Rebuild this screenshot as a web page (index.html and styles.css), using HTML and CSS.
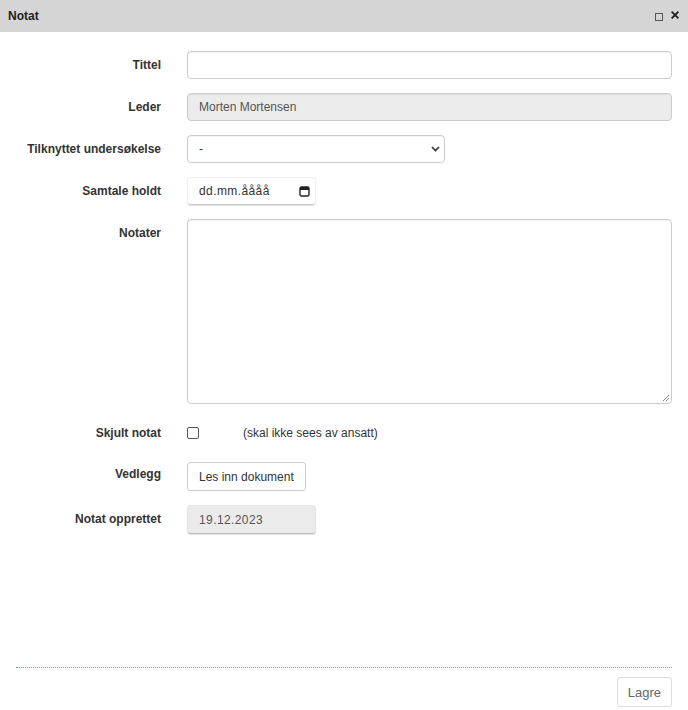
FILE: index.html
```html
<!DOCTYPE html>
<html lang="no">
<head>
<meta charset="utf-8">
<title>Notat</title>
<link rel="stylesheet" href="styles.css">
</head>
<body>
<div class="dialog">
  <div class="titlebar">
    <span class="title">Notat</span>
    <span class="controls">
      <span class="max"></span>
      <svg class="close" width="8" height="8" viewBox="0 0 8 8"><path d="M1.3 1.3 L6.7 6.7 M6.7 1.3 L1.3 6.7" stroke="#222" stroke-width="1.9" stroke-linecap="square"/></svg>
    </span>
  </div>
  <div class="content">
    <div class="form">
      <label class="lbl">Tittel</label>
      <div class="field"><div class="input wide"></div></div>

      <label class="lbl">Leder</label>
      <div class="field"><div class="input wide readonly">Morten Mortensen</div></div>

      <label class="lbl">Tilknyttet undersøkelse</label>
      <div class="field"><div class="input select"><span>-</span>
        <svg class="chev" width="9" height="6" viewBox="0 0 9 6"><path d="M1 1 L4.5 4.5 L8 1" fill="none" stroke="#333" stroke-width="1.6"/></svg></div></div>

      <label class="lbl">Samtale holdt</label>
      <div class="field"><div class="date"><span class="mono">dd.mm.åååå</span>
        <svg class="cal" width="11" height="11" viewBox="0 0 11 11"><rect x="1" y="1" width="9" height="9" rx="1.5" fill="none" stroke="#222" stroke-width="1.4"/><rect x="1" y="1" width="9" height="3" fill="#222"/></svg></div></div>

      <label class="lbl">Notater</label>
      <div class="field"><div class="textarea">
        <svg class="grip" width="8" height="8" viewBox="0 0 8 8"><path d="M7 1 L1 7 M7 4 L4 7" stroke="#888" stroke-width="1"/></svg></div></div>

      <label class="lbl lbl-check">Skjult notat</label>
      <div class="field check-row"><span class="checkbox"></span><span class="hint">(skal ikke sees av ansatt)</span></div>

      <label class="lbl lbl-btn">Vedlegg</label>
      <div class="field"><span class="btn">Les inn dokument</span></div>

      <label class="lbl">Notat opprettet</label>
      <div class="field"><div class="date readonly-date"><span class="mono">19.12.2023</span></div></div>
    </div>
  </div>
  <div class="footer">
    <span class="btn save">Lagre</span>
  </div>
</div>
</body>
</html>
```
FILE: styles.css
```css
html, body {
  margin: 0;
  padding: 0;
  background: #fff;
}
body {
  font-family: "Liberation Sans", Arial, sans-serif;
  font-size: 12px;
  color: #333;
  width: 688px;
  height: 710px;
  overflow: hidden;
}
.dialog {
  display: flex;
  flex-direction: column;
  height: 710px;
}
.titlebar {
  height: 32px;
  background: #d5d5d5;
  display: flex;
  align-items: center;
  justify-content: space-between;
  padding: 0 9px 0 8px;
  box-sizing: border-box;
}
.title {
  font-weight: bold;
  font-size: 12px;
  color: #222;
}
.controls {
  display: flex;
  align-items: center;
  gap: 8px;
  margin-top: -2px;
}
.max {
  width: 6px;
  height: 6px;
  border: 1px solid #555;
  margin-top: 3px;
}
.close { display: block; }
.content {
  flex: 1;
  padding-top: 19px;
}
.form {
  display: grid;
  grid-template-columns: 161px 485px;
  column-gap: 26px;
  row-gap: 14px;
}
.lbl {
  text-align: right;
  font-weight: bold;
  color: #333;
  padding-top: 7px;
  line-height: 14px;
  white-space: nowrap;
}
.lbl-check { padding-top: 0; align-self: center; }
.lbl-btn { padding-top: 5px; }
.field { display: flex; align-items: flex-start; }
.input {
  box-sizing: border-box;
  height: 28px;
  border: 1px solid #ccc;
  border-radius: 4px;
  padding: 0 11px;
  display: flex;
  align-items: center;
  color: #555;
  background: #fff;
  box-shadow: inset 0 1px 1px rgba(0,0,0,0.05);
}
.wide { width: 485px; }
.readonly { background: #ebebeb; }
.select {
  width: 258px;
  height: 28px;
  justify-content: space-between;
  padding-right: 4px;
  color: #333;
}
.chev { display: block; }
.date {
  box-sizing: border-box;
  width: 129px;
  height: 28px;
  border: 1px solid #f0f0f0;
  border-bottom-color: #c8c8c8;
  border-radius: 4px;
  box-shadow: 0 1px 1px rgba(0,0,0,0.12);
  display: flex;
  align-items: center;
  justify-content: space-between;
  padding: 0 5px 0 11px;
  color: #333;
}
.mono { letter-spacing: 0.4px; }
.cal { display: block; }
.readonly-date {
  background: #ebebeb;
  border-color: #e4e4e4;
  border-bottom-color: #bdbdbd;
  color: #555;
  height: 29px;
}
.textarea {
  box-sizing: border-box;
  width: 485px;
  height: 185px;
  border: 1px solid #ccc;
  border-radius: 4px;
  position: relative;
  box-shadow: inset 0 1px 1px rgba(0,0,0,0.05);
}
.grip {
  position: absolute;
  right: 1px;
  bottom: 1px;
}
.check-row {
  align-items: center;
  height: 30px;
}
.checkbox {
  box-sizing: border-box;
  width: 12px;
  height: 12px;
  border: 1px solid #555;
  border-radius: 2px;
  background: #fff;
}
.hint {
  margin-left: 44px;
  color: #333;
}
.btn {
  display: inline-flex;
  align-items: center;
  box-sizing: border-box;
  height: 29px;
  padding: 0 11px;
  border: 1px solid #ccc;
  border-radius: 3px;
  background: #fff;
  color: #333;
}
.footer {
  margin: 0 16px;
  border-top: 1px dotted #5f97d4;
  display: flex;
  justify-content: flex-end;
  padding: 9px 0 3px;
}
.save {
  color: #666;
  height: 30px;
  padding: 0 10px;
  border-color: #ddd;
  font-size: 13px;
}
```
